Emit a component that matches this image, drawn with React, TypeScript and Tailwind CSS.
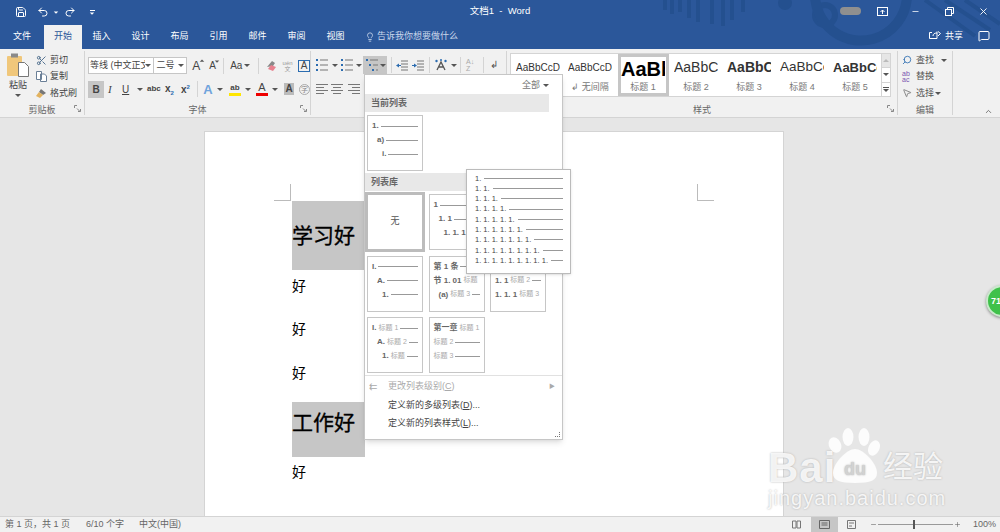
import { ChevronUp, MessageSquare, Minus, Plus, Redo2, Save, Scissors, Search, Undo2, X, Lightbulb, MousePointer2 } from 'lucide-react';

const tabs = ['文件', '开始', '插入', '设计', '布局', '引用', '邮件', '审阅', '视图'];

const styles = [
  { sample: 'AaBbCcDd', label: '', cls: 'text-[10px]', box: 'w-[52px] pl-[3px]' },
  { sample: 'AaBbCcDd', label: '↲ 无间隔', cls: 'text-[10px]', box: 'w-[53px] pl-[3px]' },
  { sample: 'AaBbCc', label: '标题 1', cls: 'text-[20px] font-bold text-black', box: 'w-[51px] border-[3px] border-[#c6c6c6]' },
  { sample: 'AaBbCcDd', label: '标题 2', cls: 'text-[14px]', box: 'w-[53px] pl-[5px]' },
  { sample: 'AaBbCcDd', label: '标题 3', cls: 'text-[14px] font-bold', box: 'w-[53px] pl-[5px]' },
  { sample: 'AaBbCcDd', label: '标题 4', cls: 'text-[13.5px]', box: 'w-[53px] pl-[5px]' },
  { sample: 'AaBbCcDd', label: '标题 5', cls: 'text-[13px] font-bold', box: 'w-[53px] pl-[5px]' },
];

function Caret({ className = '' }: { className?: string }) {
  return <span className={`inline-block shrink-0 w-0 h-0 border-x-[3px] border-x-transparent border-t-[3px] border-t-[#555] ${className}`} />;
}

function Divider({ className = '' }: { className?: string }) {
  return <span className={`h-[16px] w-px bg-[#d4d4d4] shrink-0 ${className}`} />;
}

// preview lines in the list gallery
function Line({ pad, text, label }: { pad: number; text: string; label?: string }) {
  return (
    <div className="flex items-center h-[14px] gap-[2px] text-[8px] font-bold text-[#666] whitespace-pre" style={{ paddingLeft: pad }}>
      {text && <span>{text}</span>}
      {label && <span className="font-normal text-[#aaa] text-[7px]">{label}</span>}
      <span className="flex-1 h-px bg-[#999]" />
    </div>
  );
}

function ListCard({ children, className = '' }: { children?: React.ReactNode; className?: string }) {
  return (
    <div className={`w-[56px] h-[56px] bg-white border border-[#c6c6c6] pt-[3px] px-[4px] overflow-hidden ${className}`}>
      {children}
    </div>
  );
}

function ListIcon({ kind = 'bullet', className = '' }: { kind?: 'bullet' | 'number' | 'multi'; className?: string }) {
  const x = kind === 'multi' ? [0, 3, 6] : [0, 0, 0];
  return (
    <svg width="12" height="14" viewBox="0 0 12 14" className={`shrink-0 ${className}`}>
      {[1, 6, 11].map((y, i) => (
        <g key={y}>
          <rect x={x[i]} y={y} width="2" height="2" fill="#2b6cb0" />
          <rect x={x[i] + 4} y={y + 0.5} width={8 - x[i]} height="1" fill="#777" />
        </g>
      ))}
    </svg>
  );
}

function AlignIcon({ kind, className = '' }: { kind: 'left' | 'center' | 'right'; className?: string }) {
  const rows = [
    [12, 1],
    [8, 4],
    [12, 7],
    [8, 10],
  ];
  return (
    <svg width="12" height="11" viewBox="0 0 12 11" className={`shrink-0 ${className}`}>
      {rows.map(([w, y]) => (
        <rect key={y} x={kind === 'left' ? 0 : kind === 'right' ? 12 - w : (12 - w) / 2} y={y} width={w} height="1" fill="#777" />
      ))}
    </svg>
  );
}

function IndentIcon({ out, className = '' }: { out?: boolean; className?: string }) {
  return (
    <svg width="12" height="11" viewBox="0 0 12 11" className={`shrink-0 ${className}`}>
      {[0, 3, 6, 9].map((y) => (
        <rect key={y} x="5" y={y + 0.5} width="7" height="1" fill="#777" />
      ))}
      <path d={out ? 'M0 5.5l3-2v1.4h2v1.2H3v1.4z' : 'M5 5.5l-3-2v1.4H0v1.2h2v1.4z'} fill="#2b6cb0" />
    </svg>
  );
}

function Launcher() {
  return (
    <svg width="7" height="7" viewBox="0 0 7 7" className="absolute right-[3px] bottom-[3px]" fill="none" stroke="#888">
      <path d="M0.5 3V0.5H3M3 3.5l3 3M6.5 4v2.5H4" />
    </svg>
  );
}

function Group({ label, width, launcher = true, children }: { label: string; width: number; launcher?: boolean; children: React.ReactNode }) {
  return (
    <div className="relative h-[64px] border-r border-[#d4d4d4] shrink-0" style={{ width }}>
      <div className="h-[52px]">{children}</div>
      <div className="text-center text-[9px] leading-[14px] text-[#666]">{label}</div>
      {launcher && <Launcher />}
    </div>
  );
}

export default function App() {
  return (
    <div className="relative w-[1000px] h-[532px] overflow-hidden flex flex-col bg-[#e6e6e6] font-['Liberation_Sans','Noto_Sans_CJK_SC',sans-serif]">
      {/* title bar + tabs */}
      <div className="relative h-[49px] bg-[#2b579a] text-white shrink-0 overflow-hidden">
        {/* decorative pattern behind the window buttons */}
        <svg className="absolute right-0 top-0" width="360" height="49" viewBox="0 0 360 49">
          <g fill="none" stroke="#24508f">
            <path d="M25 0v10M32 0v14M40 0v12M49 0v18M58 0v22M72 0v24M83 0v26M92 0v20M103 0v12" strokeWidth="4" />
            <circle cx="185" cy="15" r="10" strokeWidth="6" />
            <path d="M175 -5a46 46 0 0 0 58 44 46 46 0 0 0 34 -44" strokeWidth="10" />
            <path d="M285 0l50 36M305 0l45 30M325 0l35 24" strokeWidth="4" />
          </g>
          <circle cx="145" cy="3" r="7" fill="#24508f" />
        </svg>
        <div className="relative flex items-center h-[24px] pl-[15px]">
          <Save size={12} />
          <Undo2 size={12} className="ml-[10px]" />
          <Caret className="ml-[4px] scale-75 border-t-white" />
          <Redo2 size={12} className="ml-[5px]" />
          <span className="ml-[13px] flex flex-col items-center gap-[1px]">
            <span className="w-[5px] h-px bg-white" />
            <Caret className="border-t-white scale-75" />
          </span>
        </div>
        <div className="absolute inset-x-0 top-0 h-[22px] text-center text-[9.5px] leading-[22px] whitespace-pre">文档1  -  Word</div>
        <div className="absolute top-0 h-[22px] left-[840px] flex items-center">
          <span className="w-[21px] h-[8px] rounded-full bg-[#8f8f8f]" />
          <svg width="11" height="9" viewBox="0 0 11 9" fill="none" stroke="#fff" className="ml-[16px]"><rect x="0.5" y="0.5" width="10" height="8" /><path d="M5.5 7V3M3.5 5l2-2 2 2" /></svg>
          <Minus size={9} className="ml-[23px]" />
          <svg width="9" height="9" viewBox="0 0 9 9" fill="none" stroke="#fff" className="ml-[25px]"><rect x="0.5" y="2.5" width="6" height="6" /><path d="M2.5 2.5v-2h6v6h-2" /></svg>
          <X size={11} className="ml-[24px]" />
        </div>
        <div className="absolute left-0 bottom-0 flex items-end h-[24px]">
          {tabs.map((t, i) => (
            <div
              key={t}
              className={`h-[24px] leading-[23px] text-center text-[9px] ${i === 0 ? 'w-[44px]' : i === 1 ? 'w-[38px] bg-[#f1f1f1] text-[#2b579a]' : 'w-[39px]'}`}
            >
              {t}
            </div>
          ))}
          <div className="flex items-center gap-[2px] h-[24px] pl-[10px] text-[9px] text-[#c9d6ea]">
            <Lightbulb size={10} />
            <span>告诉我你想要做什么</span>
          </div>
        </div>
        <div className="absolute right-[10px] bottom-[6px] flex items-center">
          <svg width="12" height="11" viewBox="0 0 12 11" fill="none" stroke="#fff"><path d="M8 0.5v7H0.5v-6H3M4 5c0-2 1.5-3 4-3M9 0.5l2.5 2L9 5" /></svg>
          <span className="text-[9px] ml-[4px] mr-[15px]">共享</span>
          <MessageSquare size={12} />
        </div>
      </div>

      {/* ribbon */}
      <div className="flex h-[69px] pt-[2px] bg-[#f1f1f1] border-b border-[#d4d4d4] shrink-0">
        <Group label="剪贴板" width={85}>
          <div className="flex text-[9px] text-[#444]">
            <div className="w-[36px] flex flex-col items-center pt-[2px]">
              <svg width="22" height="24" viewBox="0 0 22 24">
                <rect x="0" y="3" width="15" height="20" rx="1" fill="#f0c77b" />
                <rect x="4" y="0.5" width="7" height="4" fill="#8a8a8a" />
                <path d="M11.5 9.5h6l4 4v10h-10z" fill="#fff" stroke="#777" />
              </svg>
              <span className="mt-[2px] leading-[12px]">粘贴</span>
              <Caret className="mt-[3px]" />
            </div>
            <div className="flex flex-col pt-px">
              <div className="flex items-center gap-[3px] h-[16.5px]"><Scissors size={11} className="text-[#4a6a8a]" />剪切</div>
              <div className="flex items-center gap-[3px] h-[16.5px]">
                <svg width="11" height="11" viewBox="0 0 11 11" fill="#fff" stroke="#6a7f96"><path d="M0.5 0.5h5v8h-5zM4.5 3h4l2 2v5.5h-6z" /></svg>
                复制
              </div>
              <div className="flex items-center gap-[3px] h-[16.5px]">
                <svg width="11" height="11" viewBox="0 0 11 11"><path d="M5 1l5 4-3 2-4-3z" fill="#777" /><path d="M3 4l4 3-3 3-4-2z" fill="#e2b25e" /></svg>
                格式刷
              </div>
            </div>
          </div>
        </Group>

        <Group label="字体" width={226}>
          <div className="pl-[3px] pt-[6px] text-[#444]">
            <div className="flex items-center h-[17px] text-[9px]">
              <div className="w-[66px] h-[17px] bg-white border border-[#c6c6c6] flex items-center justify-between pl-px pr-[2px] whitespace-nowrap overflow-hidden">
                <span className="w-[55px] overflow-hidden">等线 (中文正文)</span>
                <Caret />
              </div>
              <div className="w-[34px] h-[17px] bg-white border border-l-0 border-[#c6c6c6] flex items-center justify-between pl-[3px] pr-[2px]">二号<Caret /></div>
              <span className="relative ml-[5px] w-[10px] text-[12px] leading-none">A<Caret className="absolute -top-px -right-[3px] scale-75 rotate-180 border-t-[#2b6cb0]" /></span>
              <span className="relative ml-[7px] w-[7px] text-[10px] leading-none">A<Caret className="absolute -top-px -right-[4px] scale-75 border-t-[#2b6cb0]" /></span>
              <Divider className="ml-[7px]" />
              <span className="ml-[6px] w-[11px] text-[10px] leading-none whitespace-nowrap">Aa</span>
              <Caret className="ml-[3px]" />
              <Divider className="ml-[8px]" />
              <svg width="11" height="12" viewBox="0 0 11 12" className="ml-[7px] shrink-0"><path d="M1 7l5-6 3 2-2 3z" fill="#888" /><path d="M2 9l3-4 5 2-3 4z" fill="#e8808e" /></svg>
              <span className="ml-[5px] w-[11px] text-[6px] leading-[6px] text-[#999] text-center">uén<br />文</span>
              <span className="ml-[5px] w-[12px] h-[12px] border border-[#2b6cb0] text-[10px] leading-[10px] text-center">A</span>
            </div>
            <div className="flex items-center h-[18px] mt-[6px] text-[10px] font-bold">
              <span className="w-[16px] h-[17px] bg-[#c6c6c6] text-center leading-[17px]">B</span>
              <span className="ml-[4px] w-[8px] italic font-normal text-[11px] font-['Liberation_Serif',serif]">I</span>
              <span className="ml-[6px] w-[8px] font-normal underline">U</span>
              <Caret className="ml-[7px]" />
              <span className="ml-[4px] w-[12px] text-[8px]">abc</span>
              <span className="ml-[6px] w-[10px] whitespace-nowrap">x<span className="text-[6px] text-[#2b6cb0] align-sub">2</span></span>
              <span className="ml-[6px] w-[10px] whitespace-nowrap">x<span className="text-[6px] text-[#2b6cb0] align-super">2</span></span>
              <Divider className="ml-[6px]" />
              <span className="ml-[5px] w-[10px] text-[13px] text-center text-[#6fa3dc] leading-none">A</span>
              <Caret className="ml-[4px]" />
              <span className="ml-[6px] w-[12px] h-[13px] border-b-[3px] border-[#ffe600] text-[8px] leading-[9px] text-center">ab</span>
              <Caret className="ml-[4px]" />
              <span className="ml-[5px] w-[12px] h-[14px] border-b-[3px] border-[#e00] text-[11px] leading-[11px] text-center font-normal">A</span>
              <Caret className="ml-[4px]" />
              <span className="ml-[6px] w-[10px] h-[12px] bg-[#bbb] text-center leading-[12px]">A</span>
              <span className="ml-[5px] w-[11px] h-[11px] rounded-full border border-[#aaa] text-[7px] font-normal text-[#888] text-center leading-[9px]">字</span>
            </div>
          </div>
        </Group>

        <Group label="段落" width={196}>
          <div className="pt-[5px]">
            <div className="flex items-center h-[18px]">
              <ListIcon className="ml-[5px]" />
              <Caret className="ml-[4px]" />
              <ListIcon kind="number" className="ml-[3px]" />
              <Caret className="ml-[3px]" />
              <span className="ml-px w-[24px] h-[18px] bg-[#c6c6c6] flex items-center pl-[3px] shrink-0">
                <ListIcon kind="multi" /><Caret className="ml-[2px]" />
              </span>
              <Divider className="ml-[4px]" />
              <IndentIcon out className="ml-[4px]" />
              <IndentIcon className="ml-[4px]" />
              <Divider className="ml-[5px]" />
              <svg width="12" height="12" viewBox="0 0 12 12" className="ml-[5px] shrink-0">
                <path d="M2 11L6 3l4 8M3.5 8h5" fill="none" stroke="#555" strokeWidth="1.3" />
                <circle cx="1.5" cy="2" r="1.2" fill="#2b6cb0" /><circle cx="10.5" cy="2" r="1.2" fill="#2b6cb0" /><circle cx="6" cy="1" r="1" fill="#2b6cb0" />
              </svg>
              <Caret className="ml-[4px]" />
              <Divider className="ml-[3px]" />
              <span className="ml-[5px] w-[11px] text-[7px] leading-[7px] text-[#aaa]">A↓<br />Z</span>
              <Divider className="ml-[6px]" />
              <span className="ml-[6px] text-[10px] leading-none text-[#555]">↲</span>
            </div>
            <div className="flex items-center h-[18px] mt-[5px]">
              <AlignIcon kind="left" className="ml-[5px]" />
              <AlignIcon kind="center" className="ml-[3px]" />
              <AlignIcon kind="right" className="ml-[5px]" />
            </div>
          </div>
        </Group>

        <div className="relative h-[64px] w-[391px] border-r border-[#d4d4d4] shrink-0">
          <div className="flex ml-[3px] mt-[2px] h-[44px] w-[381px]">
            <div className="flex w-[372px] pl-[2px] bg-white border border-[#d4d4d4] overflow-hidden">
              {styles.map((s, i) => (
                <div key={i} className={`${s.box} h-[42px] shrink-0 flex flex-col overflow-hidden`}>
                  <div className={`h-[27px] w-[44px] flex items-center overflow-hidden whitespace-nowrap text-[#333] ${s.cls}`}>{s.sample}</div>
                  <div className="text-[9px] leading-[12px] text-[#777] whitespace-nowrap w-[44px] text-center">{s.label}</div>
                </div>
              ))}
            </div>
            <div className="w-[9px] flex flex-col border border-l-0 border-[#d4d4d4]">
              <div className="flex-1 flex items-center justify-center bg-[#e6e6e6]"><Caret className="rotate-180 border-t-[#bbb]" /></div>
              <div className="flex-1 flex items-center justify-center bg-white border-y border-[#d4d4d4]"><Caret /></div>
              <div className="flex-1 flex flex-col gap-[1px] items-center justify-center bg-white"><span className="w-[6px] h-px bg-[#555]" /><Caret /></div>
            </div>
          </div>
          <div className="text-center text-[9px] leading-[14px] text-[#666] mt-[6px]">样式</div>
          <Launcher />
        </div>

        <Group label="编辑" width={55} launcher={false}>
          <div className="flex flex-col pl-[4px] pt-px text-[9px] text-[#555]">
            <div className="flex items-center h-[16.5px]"><Search size={10} className="text-[#2b6cb0] -scale-x-100" /><span className="ml-[4px]">查找</span><Caret className="ml-[7px]" /></div>
            <div className="flex items-center h-[16.5px]"><span className="w-[10px] text-[7px] leading-[6px] text-[#7a52b0]">ab<br />ac</span><span className="ml-[4px]">替换</span></div>
            <div className="flex items-center h-[16.5px]"><MousePointer2 size={10} className="text-[#777]" /><span className="ml-[4px]">选择</span><Caret className="ml-px" /></div>
          </div>
        </Group>
        <div className="flex-1 relative"><ChevronUp size={9} className="absolute right-[7px] bottom-[1px] text-[#555]" /></div>
      </div>

      {/* document area */}
      <div className="flex-1 pt-[13px] pl-[204px] overflow-hidden">
        <div className="relative w-[580px] h-[500px] bg-white border border-[#d4d4d4] border-b-0 pt-[69px] pl-[87px]">
          {/* margin corners */}
          <span className="absolute left-[69px] top-[52px] w-[17px] h-[17px] border-r border-b border-[#bbb]" />
          <span className="absolute right-[69px] top-[52px] w-[17px] h-[17px] border-l border-b border-[#bbb]" />
          <div className="w-[72px] h-[69px] bg-[#c6c6c6] flex items-center text-[21px] text-black leading-none whitespace-nowrap [-webkit-text-stroke:0.3px_#000]">学习好</div>
          <div className="h-[30px] mt-px text-[14px] leading-[30px] text-black">好</div>
          <div className="h-[30px] mt-[13px] text-[14px] leading-[30px] text-black">好</div>
          <div className="h-[30px] mt-[14px] text-[14px] leading-[30px] text-black">好</div>
          <div className="w-[73px] h-[55px] mt-[14px] pt-[10px] bg-[#c6c6c6] text-[21px] text-black leading-[21px] whitespace-nowrap [-webkit-text-stroke:0.3px_#000]">工作好</div>
          <div className="h-[30px] text-[14px] leading-[30px] text-black">好</div>
        </div>
      </div>

      {/* status bar */}
      <div className="h-[16px] bg-[#f1f1f1] border-t border-[#d4d4d4] flex items-center text-[9px] text-[#666] shrink-0 pl-[5px]">
        <span className="w-[81px] whitespace-pre">第 1 页，共 1 页</span>
        <span className="w-[53px]">6/10 个字</span>
        <span>中文(中国)</span>
        <div className="absolute left-[792px] bottom-0 h-[15px] flex items-center">
          <svg width="9" height="9" viewBox="0 0 9 9" fill="none" stroke="#777"><path d="M0.5 1h3.5v7H0.5zM5 1h3.5v7H5z" /></svg>
          <span className="ml-[10px] w-[27px] h-full bg-[#c6c6c6] flex items-center justify-center">
            <svg width="11" height="9" viewBox="0 0 11 9" fill="none" stroke="#666"><path d="M0.5 0.5h10v8h-10zM2.5 3h6M2.5 5h6" /></svg>
          </span>
          <svg width="9" height="9" viewBox="0 0 9 9" fill="none" stroke="#777" className="ml-[9px]"><path d="M0.5 0.5h8v8h-8zM2 3h5M2 6h3" /></svg>
          <Minus size={7} className="ml-[14px]" />
          <span className="relative ml-[1px] w-[75px] h-px bg-[#999]"><span className="absolute left-[35px] -top-[4px] w-[2px] h-[9px] bg-[#555]" /></span>
          <Plus size={7} className="ml-[1px]" />
          <span className="ml-[12px]">100%</span>
        </div>
      </div>

      {/* watermark */}
      <div className="absolute left-[766px] top-[425px] w-[200px] h-[95px] text-white/85 pointer-events-none [text-shadow:0_0_2px_#aaa]">
        <div className="absolute left-[2px] top-[22px] text-[42px] font-bold leading-none tracking-[1px]">Bai</div>
        <svg className="absolute left-[61px] top-0" width="53" height="58" viewBox="0 0 53 58" fill="#fff" fillOpacity="0.85">
          <ellipse cx="8" cy="20" rx="6" ry="8" transform="rotate(-25 8 20)" />
          <ellipse cx="21" cy="12" rx="5.5" ry="9" />
          <ellipse cx="37" cy="12" rx="5.5" ry="9" />
          <ellipse cx="47" cy="23" rx="5.5" ry="8" transform="rotate(25 47 23)" />
          <path d="M28 24c8 0 22 14 22 24 0 7-6 10-22 10S6 55 6 48c0-10 14-24 22-24z" />
        </svg>
        <div className="absolute left-[78px] top-[35px] text-[18px] font-bold text-[#d2d2d2] leading-none">du</div>
        <div className="absolute left-[117px] top-[27px] text-[30px] leading-none">经验</div>
        <div className="absolute left-[2px] top-[63px] text-[20px] leading-none tracking-[1px] whitespace-nowrap">jingyan.baidu.com</div>
      </div>

      {/* green badge */}
      <div className="absolute left-[986px] top-[285px] w-[32px] h-[32px] rounded-full bg-[#3fc14a] border-2 border-[#c9e9cb] shadow-[0_1px_3px_#888] text-white text-[9px] font-bold pl-[3px] leading-[28px]">71</div>

      {/* multilevel list menu */}
      <div className="absolute left-[364px] top-[74px] w-[199px] h-[366px] bg-white border border-[#c6c6c6] shadow-md text-[9px] text-[#555]">
        <div className="h-[19px] pt-[2px] flex items-center justify-end gap-[3px] pr-[13px] text-[#777]">全部<Caret /></div>
        <div className="mr-[13px] h-[18px] pt-[2px] bg-[#e8e8e8] flex items-center pl-[6px] font-bold text-[#666]">当前列表</div>
        <ListCard className="ml-[2px] mt-[3px]">
          <Line pad={0} text="1." />
          <Line pad={5} text="a)" />
          <Line pad={10} text="i." />
        </ListCard>
        <div className="mt-[2px] mr-[13px] h-[18px] pt-[2px] bg-[#e8e8e8] flex items-center pl-[6px] font-bold text-[#666]">列表库</div>
        <div className="grid grid-cols-[56px_56px_56px] gap-x-[5.5px] gap-y-[5.5px] pl-[2px] pt-[3px]">
          <div className="-m-[2px] w-[60px] h-[60px] bg-white border-[3px] border-[#bcbcbc] flex items-center justify-center">无</div>
          <ListCard><Line pad={0} text="1" /><Line pad={5} text="1. 1" /><Line pad={10} text="1. 1. 1" /></ListCard>
          <div />
          <ListCard><Line pad={0} text="I." /><Line pad={5} text="A." /><Line pad={10} text="1." /></ListCard>
          <ListCard>
            <Line pad={0} text="第 1 条" />
            <Line pad={0} text="节 1. 01" label="标题" />
            <Line pad={5} text="(a)" label="标题 3" />
          </ListCard>
          <ListCard><Line pad={0} text="1" label="标题 1" /><Line pad={0} text="1. 1" label="标题 2" /><Line pad={0} text="1. 1. 1" label="标题 3" /></ListCard>
          <ListCard><Line pad={0} text="I." label="标题 1" /><Line pad={5} text="A." label="标题 2" /><Line pad={10} text="1." label="标题" /></ListCard>
          <ListCard><Line pad={0} text="第一章" label="标题 1" /><Line pad={0} text="" label="标题 2" /><Line pad={0} text="" label="标题 3" /></ListCard>
        </div>
        <div className="relative border-t border-[#e1e1e1] mt-[2px] h-[20px] pt-[2px] flex items-center text-[#aaa] pl-[23px]">
          <span className="absolute left-[4px] text-[10px]">⇇</span>
          <span>更改列表级别(<u>C</u>)</span>
          <span className="absolute right-[7px] text-[6px]">▶</span>
        </div>
        <div className="h-[18px] pt-[3px] flex items-center pl-[23px] text-[#444]"><span>定义新的多级列表(<u>D</u>)...</span></div>
        <div className="h-[18px] pt-[3px] flex items-center pl-[23px] text-[#444]"><span>定义新的列表样式(<u>L</u>)...</span></div>
        <span className="absolute right-[2px] bottom-[2px] w-[5px] h-[5px] border-r border-b border-dotted border-[#777]" />
      </div>

      {/* hover preview */}
      <div className="absolute left-[466px] top-[169px] w-[105px] h-[105px] bg-white border border-[#bbb] pl-[8px] pr-[7px] pt-[3px] shadow-sm">
        {Array.from({ length: 9 }).map((_, i) => (
          <div key={i} className="flex items-center h-[10.3px] gap-[3px] text-[7.5px] text-[#444] whitespace-nowrap">
            <span>{Array.from({ length: i + 1 }).map(() => '1.').join(' ')}</span>
            <span className="flex-1 h-px bg-[#999]" />
          </div>
        ))}
      </div>
    </div>
  );
}
